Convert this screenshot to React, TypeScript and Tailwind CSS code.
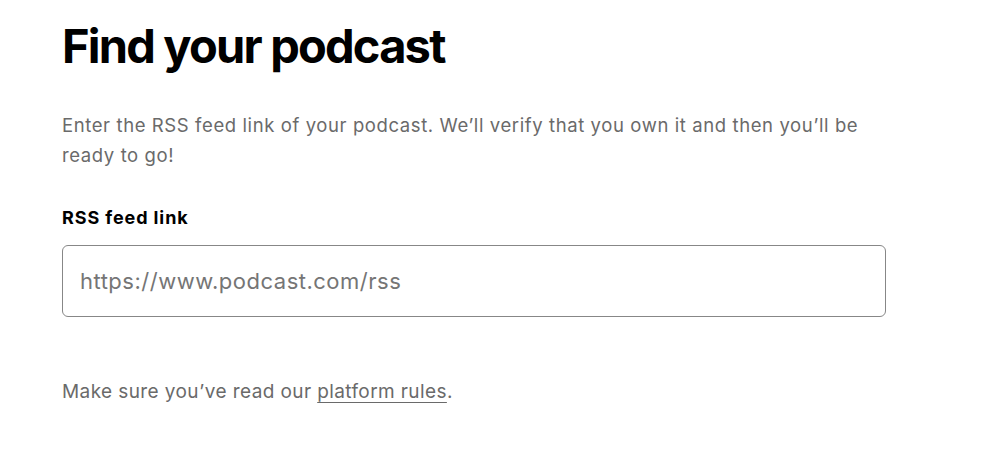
export default function App() {
  return (
    <div className="min-h-screen bg-white font-['Inter','Liberation_Sans',sans-serif]">
      <div className="pl-[62px] pt-[18px] w-[886px]">
        <h1 className="text-[47px] leading-[56px] font-bold tracking-[-1.8px] text-black">Find your podcast</h1>
        <p className="mt-[36px] text-[18.5px] leading-[30px] tracking-[0.6px] text-[#6a6a6a]">
          Enter the RSS feed link of your podcast. We’ll verify that you own it and then you’ll be ready to go!
        </p>
        <label className="block mt-[36px] text-[18px] leading-[24px] font-bold tracking-[0.9px] text-black">RSS feed link</label>
        <input
          placeholder="https://www.podcast.com/rss"
          className="mt-[15px] block w-full h-[72px] px-[17px] rounded-[6px] border border-[#878787] text-[22px] tracking-[0.5px] text-black placeholder:text-[#757575] outline-none"
        />
        <p className="mt-[60px] text-[19px] leading-[30px] tracking-[0.4px] text-[#6a6a6a]">
          Make sure you’ve read our <a href="#" className="underline underline-offset-4 text-[#6a6a6a]">platform rules</a>.
        </p>
      </div>
    </div>
  );
}
